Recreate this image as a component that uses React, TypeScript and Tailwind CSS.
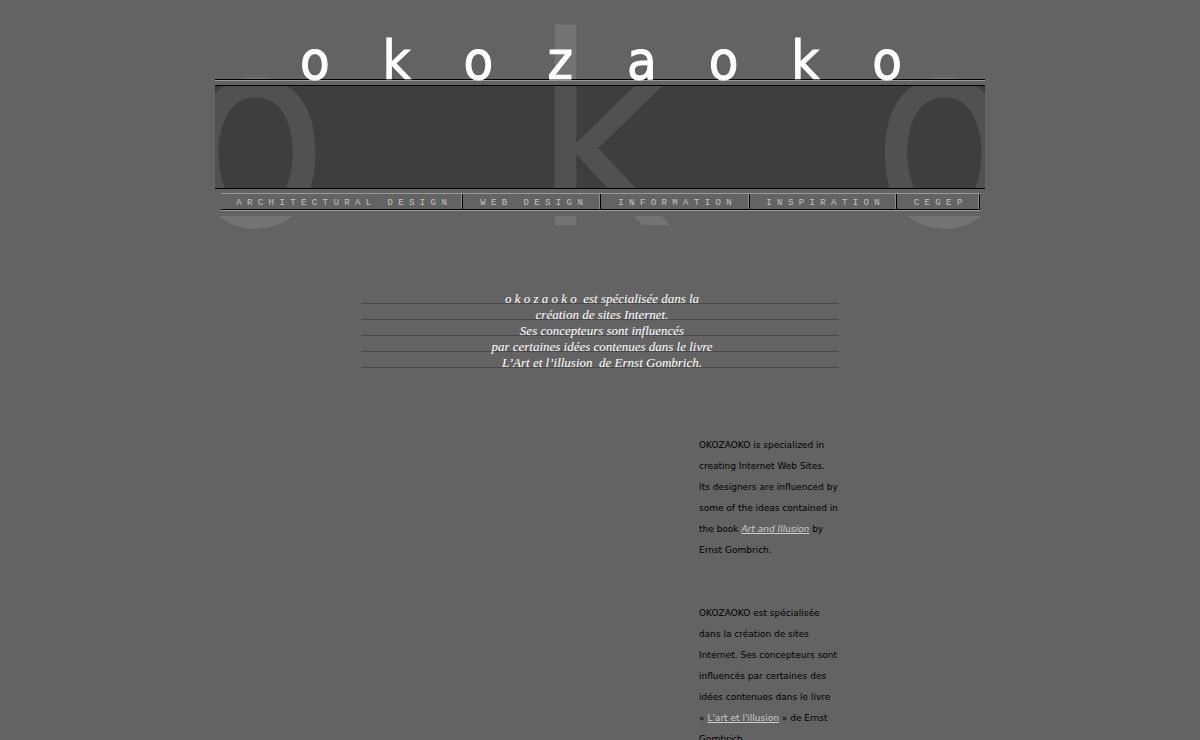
const titleLetters = ["o", "k", "o", "z", "a", "o", "k", "o"];

const menu = [
  { label: "Architectural Design", text: "A R C H I T E C T U R A L   D E S I G N", size: "w-[242px]" },
  { label: "Web Design", text: "W E B   D E S I G N", size: "w-[138px]" },
  { label: "Information", text: "I N F O R M A T I O N", size: "w-[149px]" },
  { label: "Inspiration", text: "I N S P I R A T I O N", size: "w-[147px]" },
  { label: "Cegep", text: "C E G E P", size: "w-[83px]" },
];

function Watermark() {
  return (
    <div
      aria-hidden="true"
      className="absolute inset-0 flex justify-between overflow-hidden text-[264px] leading-[268px] text-white/10 font-['DejaVu_Sans_Condensed','DejaVu_Sans',sans-serif]"
    >
      <span className="-ml-8">o</span>
      <span className="pl-1">k</span>
      <span className="-mr-8">o</span>
    </div>
  );
}

function Header() {
  return (
    <header className="relative mx-auto h-60 max-w-[770px]">
      <h1
        aria-label="okozaoko"
        className="grid h-20 grid-cols-8 pt-[30px] pr-[57px] pl-[59px] text-center text-[54px] leading-[62px] text-white [-webkit-text-stroke:1px_white] font-['DejaVu_Sans_Condensed','DejaVu_Sans',sans-serif]"
      >
        {titleLetters.map((letter, i) => (
          <span key={i} className="relative z-20">
            {letter}
          </span>
        ))}
      </h1>
      <div className="h-[110px] bg-[#3e3e3e]"></div>
      <Watermark />
      <div className="absolute inset-x-0 top-[79px] z-10 h-[7px] border-y border-black bg-[#636363]">
        <div className="h-px bg-[#9c9c9c]"></div>
      </div>
      <div className="relative z-10 -mt-0.5 border-t border-black bg-[#636363] pt-1 pr-[5px] pb-[5px] pl-1.5">
        <nav className="flex border-t border-b border-[#9a9a9a]">
          {menu.map((item) => (
            <a
              key={item.label}
              href="#"
              aria-label={item.label}
              className={
                "h-4 border-r border-b border-black text-center text-[9px] leading-[18px] whitespace-pre text-[#c4c4c4] shadow-[inset_-1px_0_#8c8c8c] font-['Liberation_Mono',monospace] " +
                item.size
              }
            >
              {item.text}
            </a>
          ))}
        </nav>
      </div>
    </header>
  );
}

function Quote() {
  const line = "h-4 border-b border-[#484848] pl-1 whitespace-pre";

  return (
    <blockquote className="mt-12 text-center text-[13px] leading-[22px] text-white italic font-['Liberation_Serif',serif]">
      <p className={line}>o k o z a o k o  est spécialisée dans la</p>
      <p className={line}>création de sites Internet.</p>
      <p className={line}>Ses concepteurs sont influencés</p>
      <p className={line}>par certaines idées contenues dans le livre</p>
      <p className={line}>
        <cite>L’Art et l’illusion</cite>  de Ernst Gombrich.
      </p>
    </blockquote>
  );
}

function App() {
  return (
    <div className="min-h-screen bg-[#636363]">
      <Header />
      <main className="mx-auto max-w-[476px]">
        <Quote />
        <div className="mt-[67px] ml-[337px] w-[143px] text-[9px] leading-[21px] text-black font-['DejaVu_Sans',sans-serif]">
          <p>
            OKOZAOKO is specialized in creating Internet Web Sites.
            <br />
            Its designers are influenced by some of the ideas contained in the
            book{" "}
            <a href="#" className="text-[#cccccc] italic underline">
              Art and Illusion
            </a>{" "}
            by Ernst Gombrich.
          </p>
          <p className="mt-[42px]">
            OKOZAOKO est spécialisée dans la création de sites Internet. Ses
            concepteurs sont influencés par certaines des idées contenues dans
            le livre «&nbsp;
            <a href="#" className="text-[#cccccc] underline">
              L'art et l'illusion
            </a>
            &nbsp;» de Ernst Gombrich.
          </p>
        </div>
      </main>
    </div>
  );
}

export default App;
